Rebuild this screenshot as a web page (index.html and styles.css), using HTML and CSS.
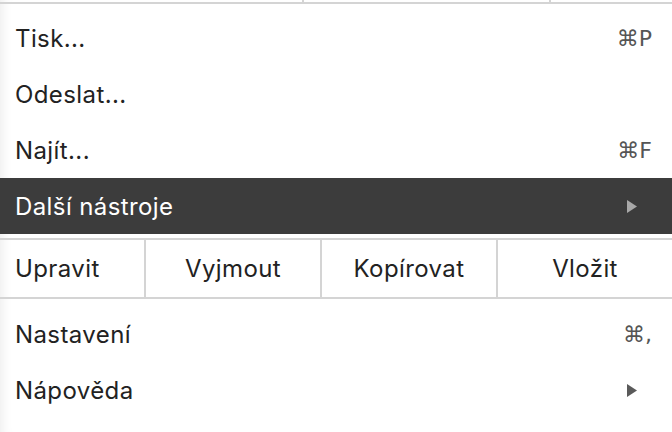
FILE: index.html
```html
<!DOCTYPE html>
<html lang="cs">
<head>
<meta charset="utf-8">
<link rel="stylesheet" href="styles.css">
</head>
<body>
<div class="menu">
  <div class="prev-row">
    <div class="prev-cell c1"></div>
    <div class="prev-cell c2"></div>
    <div class="prev-cell c3"></div>
  </div>
  <div class="section top">
    <div class="item"><span class="label">Tisk...</span><span class="shortcut">⌘P</span></div>
    <div class="item"><span class="label">Odeslat...</span></div>
    <div class="item"><span class="label">Najít...</span><span class="shortcut">⌘F</span></div>
    <div class="item active"><span class="label">Další nástroje</span><svg class="arrow" width="10" height="13" viewBox="0 0 10 13"><path d="M0 0 L10 6.5 L0 13 Z"/></svg></div>
  </div>
  <div class="edit-row">
    <div class="edit-cell first">Upravit</div>
    <div class="edit-cell">Vyjmout</div>
    <div class="edit-cell">Kopírovat</div>
    <div class="edit-cell">Vložit</div>
  </div>
  <div class="section bottom">
    <div class="item"><span class="label">Nastavení</span><span class="shortcut">⌘,</span></div>
    <div class="item"><span class="label">Nápověda</span><svg class="arrow" width="10" height="13" viewBox="0 0 10 13"><path d="M0 0 L10 6.5 L0 13 Z"/></svg></div>
  </div>
</div>
</body>
</html>
```
FILE: styles.css
```css
html, body {
  margin: 0;
  padding: 0;
  background: #ffffff;
}
body {
  width: 672px;
  height: 432px;
  overflow: hidden;
  font-family: Inter, "Noto Sans", "DejaVu Sans", sans-serif;
  color: #222222;
}
.menu {
  width: 672px;
  height: 432px;
  background: #ffffff;
  display: flex;
  flex-direction: column;
  box-shadow: inset 12px 0 12px -10px rgba(0,0,0,0.08);
}
.prev-row {
  display: flex;
  height: 2px;
  border-bottom: 2px solid #d4d4d4;
}
.prev-cell {
  height: 2px;
}
.prev-cell.c1 { width: 302px; border-right: 2px solid #d4d4d4; }
.prev-cell.c2 { width: 245px; border-right: 2px solid #d4d4d4; }
.prev-cell.c3 { flex: 1; }
.section.top {
  padding-top: 6px;
  display: flex;
  flex-direction: column;
}
.item {
  height: 56px;
  display: flex;
  align-items: center;
  justify-content: space-between;
  padding: 0 20px 0 15px;
  font-size: 24px;
  letter-spacing: 0.4px;
}
.item.active {
  background: #3c3c3c;
  color: #ffffff;
}
.shortcut {
  font-family: "DejaVu Sans", sans-serif;
  color: #555555;
  font-size: 22px;
  letter-spacing: 0;
}
.arrow {
  fill: #5a5a5a;
  margin-right: 15px;
}
.item.active .arrow {
  fill: #a8a8a8;
}
.edit-row {
  margin-top: 4px;
  display: flex;
  height: 57px;
  border-top: 2px solid #d4d4d4;
  border-bottom: 2px solid #d4d4d4;
}
.edit-cell {
  width: 176px;
  display: flex;
  align-items: center;
  justify-content: center;
  font-size: 24px;
  letter-spacing: 0.4px;
  border-left: 2px solid #d4d4d4;
  box-sizing: border-box;
}
.edit-cell.first {
  width: 144px;
  border-left: none;
  justify-content: flex-start;
  padding-left: 15px;
}
.edit-cell:last-child {
  flex: 1;
}
.section.bottom {
  padding-top: 7px;
  display: flex;
  flex-direction: column;
}
```
